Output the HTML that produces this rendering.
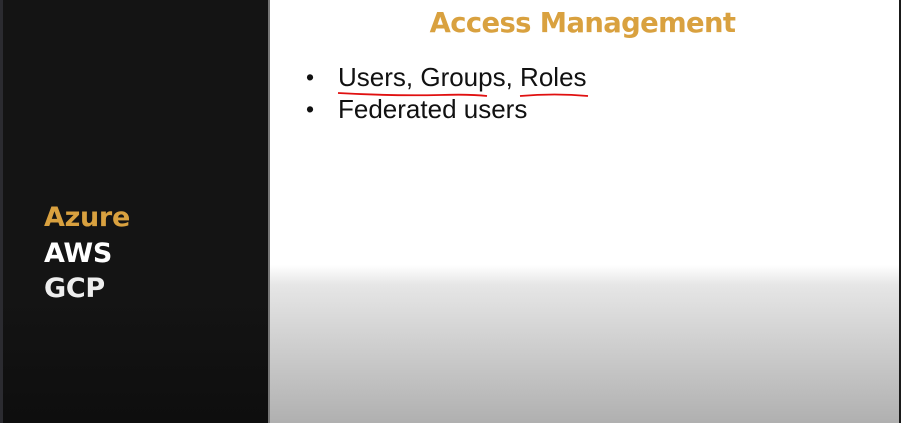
<!DOCTYPE html>
<html><head><meta charset="utf-8"><style>
html,body{margin:0;padding:0;width:901px;height:423px;overflow:hidden;background:#fff}
body{position:relative;font-family:"Liberation Sans",sans-serif}
#left{position:absolute;left:0;top:0;width:268px;height:423px;background:linear-gradient(#141414 0%,#141414 70%,#0e0e0e 100%)}
#strip{position:absolute;left:0;top:0;width:3px;height:423px;background:#2b2b30}
#sep{position:absolute;left:268px;top:0;width:2px;height:423px;background:#777}
#main{position:absolute;left:270px;top:0;width:629px;height:423px;background:linear-gradient(#fff 0,#fff 265px,#e6e6e6 285px,#b0b0b0 423px)}
#redge{position:absolute;left:899px;top:0;width:2px;height:423px;background:#1a1a1a}
.side{position:absolute;left:44px;font-weight:bold;font-size:27px;line-height:36px;font-family:"DejaVu Sans","Liberation Sans",sans-serif;letter-spacing:-0.3px}
h1{position:absolute;left:0;width:901px;top:8px;margin:0;text-align:center;font-size:27.4px;font-weight:bold;color:#d9a13f;font-family:"DejaVu Sans","Liberation Sans",sans-serif;letter-spacing:-0.6px;padding-left:264px;box-sizing:border-box}
.li{position:absolute;left:338px;font-size:26px;color:#111}
.b{position:absolute;left:306px;font-size:23px;color:#111}
</style></head><body>
<div id="left"></div><div id="strip"></div><div id="sep"></div><div id="main"></div><div id="redge"></div>
<div class="side" style="top:200px;color:#d9a13f">Azure</div>
<div class="side" style="top:236px;color:#fff">AWS</div>
<div class="side" style="top:271px;color:#eee">GCP</div>
<h1>Access Management</h1>
<div class="b" style="top:64px">•</div>
<div class="li" style="top:62px">Users, Groups, Roles</div>
<div class="b" style="top:96px">•</div>
<div class="li" style="top:94px">Federated users</div>
<svg style="position:absolute;left:0;top:0" width="901" height="423">
<path d="M338 93 Q390 96 440 95 Q470 94 487 96" stroke="#e01010" stroke-width="1.8" fill="none"/>
<path d="M520 96 Q555 93 588 96" stroke="#e01010" stroke-width="1.8" fill="none"/>
</svg>
</body></html>
